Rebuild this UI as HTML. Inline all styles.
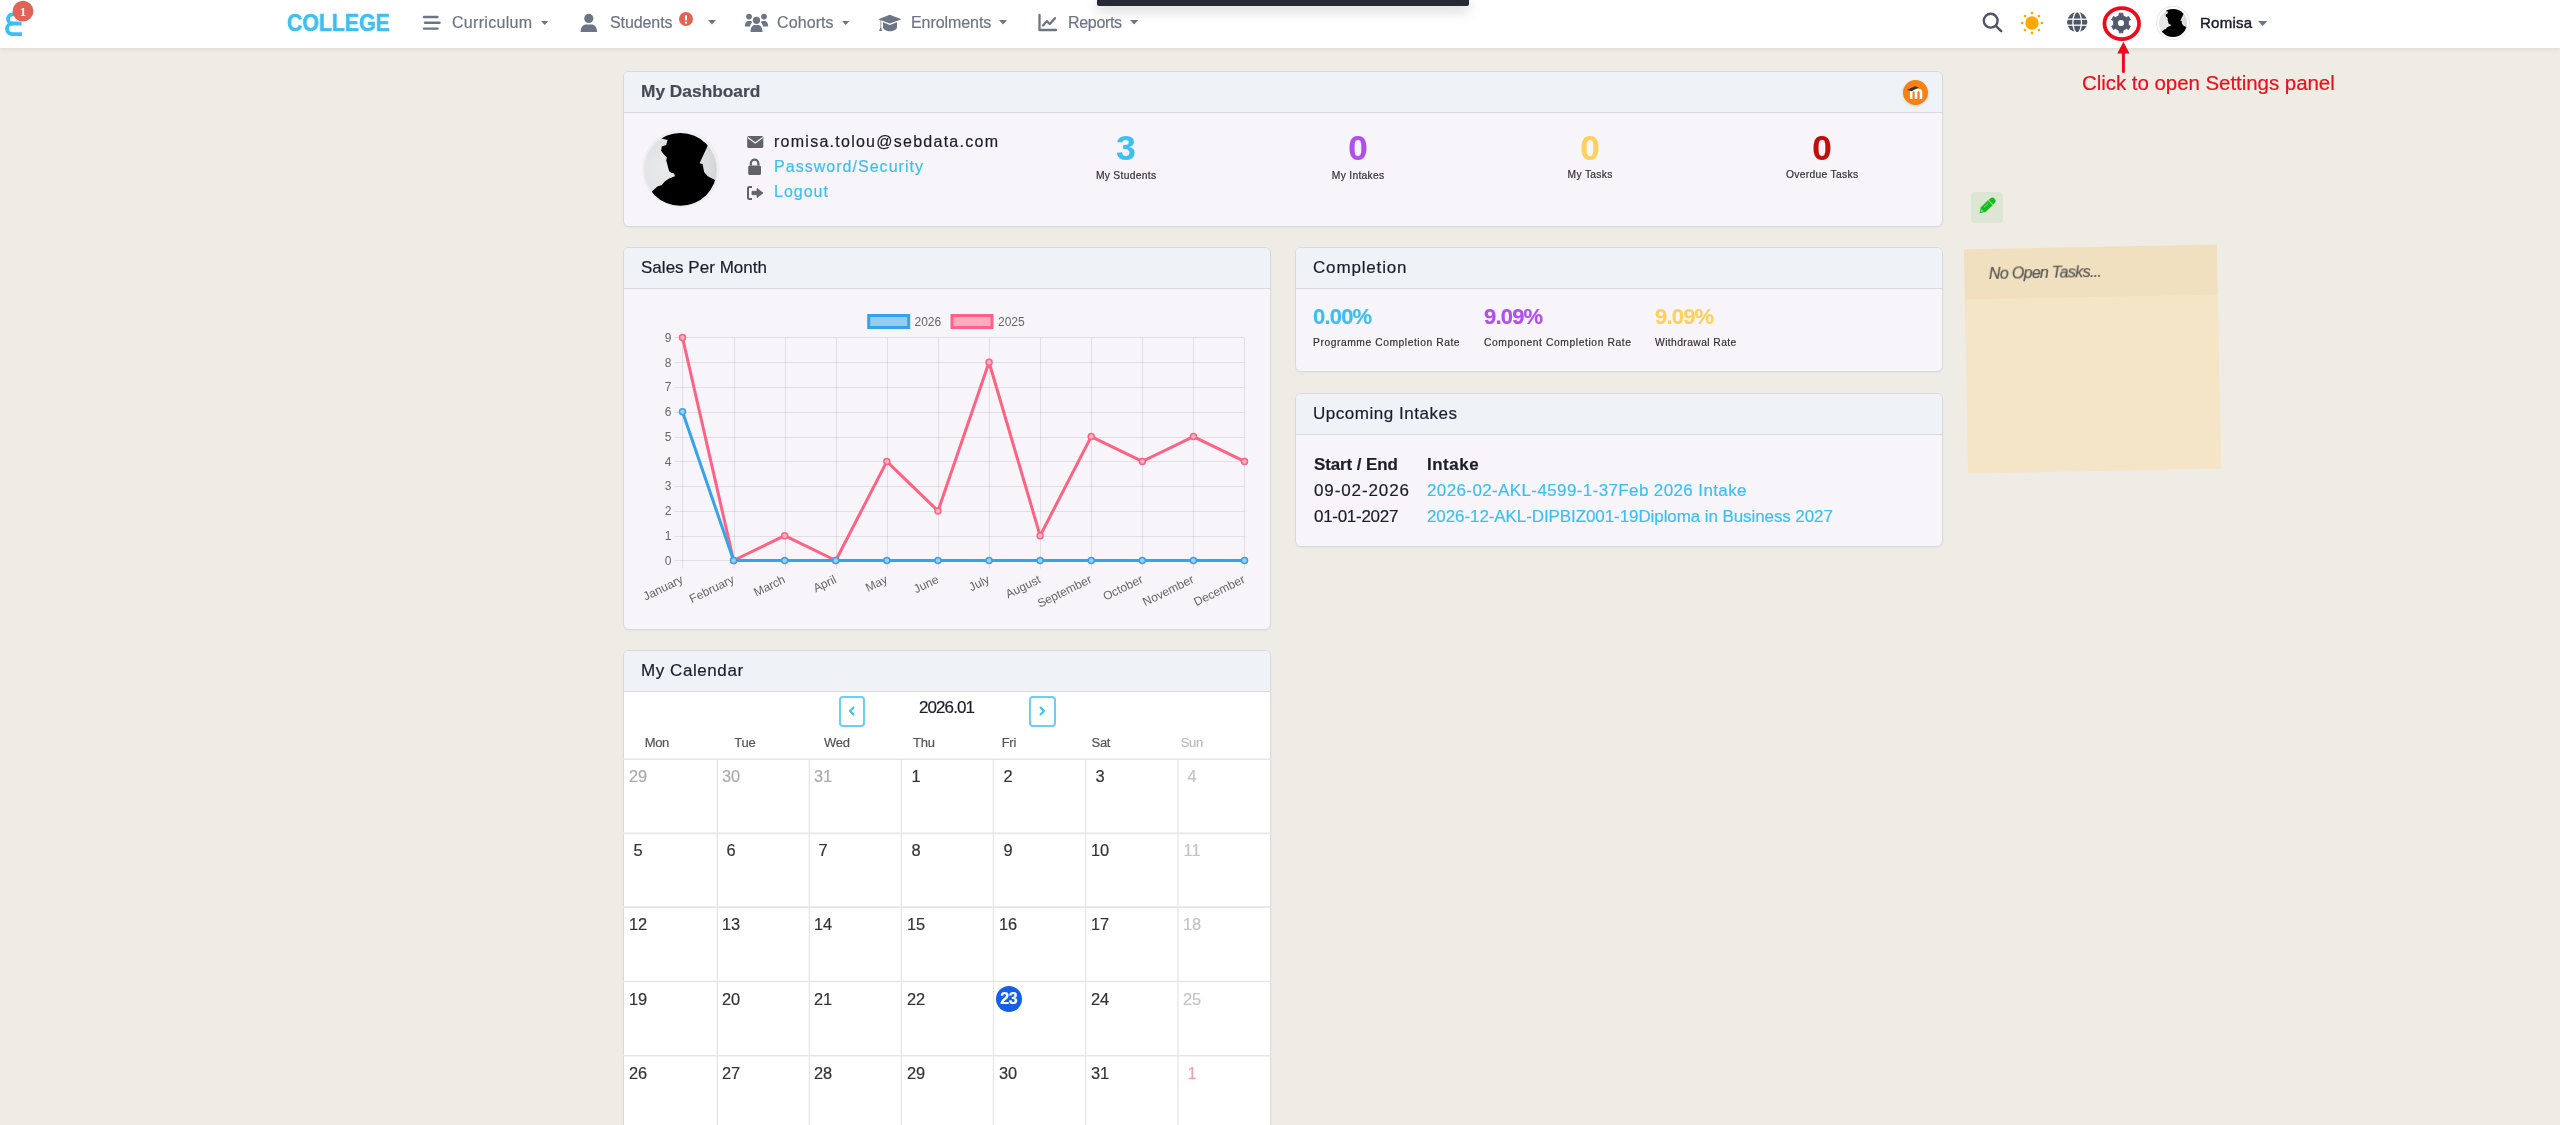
<!DOCTYPE html>
<html><head><meta charset="utf-8"><style>
html,body{margin:0;padding:0;width:2560px;height:1125px;overflow:hidden;background:#efebe5;font-family:"Liberation Sans", sans-serif;}
.t{position:absolute;white-space:nowrap;font-family:"Liberation Sans", sans-serif;will-change:transform;-webkit-text-stroke:0.2px currentColor;}
svg{will-change:transform;}
</style></head><body>
<div style="position:absolute;left:0px;top:0px;width:2560px;height:48px;background:#fff;box-shadow:0 1px 4px rgba(60,40,20,0.10);"></div>
<div style="position:absolute;left:1097px;top:0px;width:372px;height:5.5px;background:#272a33;border-radius:0 0 2px 2px;box-shadow:0 3px 14px rgba(0,0,0,0.28);"></div>
<svg style="position:absolute;left:0px;top:0px;overflow:visible;" width="40" height="40" viewBox="0 0 40 40"><path d="M21.5 23.5 H12.5 A4.5 4.55 0 0 1 12.5 14.4 H16" fill="none" stroke="#3cbff3" stroke-width="3.8"/><path d="M12.5 23.5 A5.5 5.3 0 0 0 12.5 34.1 H22" fill="none" stroke="#3cbff3" stroke-width="3.8"/><circle cx="23" cy="11.2" r="10.4" fill="#e06357"/><text x="23" y="15.6" text-anchor="middle" font-family="Liberation Serif" font-size="13" font-weight="700" fill="#fff">1</text></svg>
<div class="t" style="left:287.00px;top:10.76px;font-size:24.2px;line-height:24.2px;color:#3cbff3;font-weight:700;transform:scaleX(0.88);transform-origin:0 0;-webkit-text-stroke:0.6px #3cbff3;">COLLEGE</div>
<svg style="position:absolute;left:420px;top:12px;overflow:visible;" width="24" height="22" viewBox="0 0 24 22"><g stroke="#6d7486" stroke-width="2.4" stroke-linecap="round"><line x1="4" y1="5" x2="17.5" y2="5"/><line x1="5" y1="10.8" x2="19.5" y2="10.8"/><line x1="4" y1="16.6" x2="17.5" y2="16.6"/></g></svg>
<div class="t" style="left:452.30px;top:15.06px;font-size:16px;line-height:16px;color:#6d7486;letter-spacing:0.31px;">Curriculum</div>
<svg style="position:absolute;left:541.2px;top:20.56500000000001px;overflow:visible;" width="7.399999999999977" height="4.069999999999988" viewBox="0 0 7.399999999999977 4.069999999999988"><path d="M0 0 H7.399999999999977 L3.6999999999999886 4.069999999999988 Z" fill="#6d7486"/></svg>
<svg style="position:absolute;left:580px;top:13px;overflow:visible;" width="18" height="20" viewBox="0 0 18 20"><circle cx="8.8" cy="5.4" r="4.6" fill="#6d7486"/><path d="M0.6 19 C0.6 13.5 3.5 11.6 6 11.6 H11.6 C14.1 11.6 17 13.5 17 19 Z" fill="#6d7486"/></svg>
<div class="t" style="left:610.00px;top:15.06px;font-size:16px;line-height:16px;color:#6d7486;letter-spacing:-0.09px;">Students</div>
<svg style="position:absolute;left:679px;top:11.5px;overflow:visible;" width="14" height="14" viewBox="0 0 14 14"><circle cx="7" cy="7" r="7" fill="#e06357"/><rect x="6" y="3" width="2" height="5.5" rx="1" fill="#fff"/><circle cx="7" cy="10.7" r="1.1" fill="#fff"/></svg>
<svg style="position:absolute;left:708.2px;top:20.400000000000002px;overflow:visible;" width="8.0" height="4.4" viewBox="0 0 8.0 4.4"><path d="M0 0 H8.0 L4.0 4.4 Z" fill="#6d7486"/></svg>
<svg style="position:absolute;left:744px;top:13px;overflow:visible;" width="25" height="20" viewBox="0 0 25 20"><circle cx="12.5" cy="7.3" r="3.6" fill="#6d7486"/><circle cx="5" cy="3.6" r="2.9" fill="#6d7486"/><circle cx="20" cy="3.6" r="2.9" fill="#6d7486"/><path d="M6.5 19 C6.5 14.5 8.5 12 11 12 H14 C16.5 12 18.5 14.5 18.5 19 Z" fill="#6d7486"/><path d="M0.8 13.6 C0.8 10 2.3 8 4.3 8 H6 C7 8 7.8 8.5 8.2 9.2 C7 10.3 6.2 11.8 6 13.6 Z" fill="#6d7486"/><path d="M24.2 13.6 C24.2 10 22.7 8 20.7 8 H19 C18 8 17.2 8.5 16.8 9.2 C18 10.3 18.8 11.8 19 13.6 Z" fill="#6d7486"/></svg>
<div class="t" style="left:776.80px;top:15.06px;font-size:16px;line-height:16px;color:#6d7486;letter-spacing:0.1px;">Cohorts</div>
<svg style="position:absolute;left:842.2px;top:20.56500000000001px;overflow:visible;" width="7.399999999999977" height="4.069999999999988" viewBox="0 0 7.399999999999977 4.069999999999988"><path d="M0 0 H7.399999999999977 L3.6999999999999886 4.069999999999988 Z" fill="#6d7486"/></svg>
<svg style="position:absolute;left:878px;top:14px;overflow:visible;" width="25" height="18" viewBox="0 0 25 18"><path d="M11.8 0.8 L23.5 5.2 L11.8 9.6 L0.3 5.2 Z" fill="#6d7486"/><path d="M5 8.2 V13 C5 15.5 8.5 17.3 12 17.3 C15.5 17.3 19 15.5 19 13 V8.2 L11.8 10.9 Z" fill="#6d7486"/><path d="M2.5 6 V13.5 L1 17 H4 L3.2 13.5 V6.3 Z" fill="#6d7486"/></svg>
<div class="t" style="left:910.50px;top:15.06px;font-size:16px;line-height:16px;color:#6d7486;letter-spacing:-0.07px;">Enrolments</div>
<svg style="position:absolute;left:998.8px;top:20.400000000000002px;overflow:visible;" width="8.0" height="4.4" viewBox="0 0 8.0 4.4"><path d="M0 0 H8.0 L4.0 4.4 Z" fill="#6d7486"/></svg>
<svg style="position:absolute;left:1038px;top:14px;overflow:visible;" width="20" height="18" viewBox="0 0 20 18"><path d="M1.5 1 V16 H18" fill="none" stroke="#6d7486" stroke-width="2.3" stroke-linecap="round" stroke-linejoin="round"/><path d="M5 11.5 L8.8 7.2 L11.8 10 L17 4.2" fill="none" stroke="#6d7486" stroke-width="2.3" stroke-linecap="round" stroke-linejoin="round"/></svg>
<div class="t" style="left:1068.00px;top:15.06px;font-size:16px;line-height:16px;color:#6d7486;letter-spacing:-0.32px;">Reports</div>
<svg style="position:absolute;left:1130.2px;top:20.29000000000004px;overflow:visible;" width="8.399999999999864" height="4.6199999999999255" viewBox="0 0 8.399999999999864 4.6199999999999255"><path d="M0 0 H8.399999999999864 L4.199999999999932 4.6199999999999255 Z" fill="#6d7486"/></svg>
<svg style="position:absolute;left:1980px;top:10px;overflow:visible;" width="26" height="26" viewBox="0 0 26 26"><circle cx="10.7" cy="10.7" r="6.9" fill="none" stroke="#4f5566" stroke-width="2.4"/><line x1="15.8" y1="15.8" x2="21.2" y2="21.2" stroke="#4f5566" stroke-width="2.5" stroke-linecap="round"/></svg>
<svg style="position:absolute;left:2020.2px;top:10.9px;overflow:visible;" width="24" height="24" viewBox="0 0 24 24"><circle cx="12" cy="12" r="6.7" fill="#ffa800"/><circle cx="21.90" cy="12.00" r="1.35" fill="#ffa800"/><circle cx="19.00" cy="19.00" r="1.35" fill="#ffa800"/><circle cx="12.00" cy="21.90" r="1.35" fill="#ffa800"/><circle cx="5.00" cy="19.00" r="1.35" fill="#ffa800"/><circle cx="2.10" cy="12.00" r="1.35" fill="#ffa800"/><circle cx="5.00" cy="5.00" r="1.35" fill="#ffa800"/><circle cx="12.00" cy="2.10" r="1.35" fill="#ffa800"/><circle cx="19.00" cy="5.00" r="1.35" fill="#ffa800"/></svg>
<svg style="position:absolute;left:2066.5px;top:12.3px;overflow:visible;" width="21" height="21" viewBox="0 0 21 21"><circle cx="10.2" cy="10.2" r="10.1" fill="#4f5669"/><ellipse cx="10.2" cy="10.2" rx="4.3" ry="10.6" fill="none" stroke="#fff" stroke-width="1.3"/><line x1="0" y1="7.2" x2="21" y2="7.2" stroke="#fff" stroke-width="1.3"/><line x1="0" y1="13.2" x2="21" y2="13.2" stroke="#fff" stroke-width="1.3"/></svg>
<svg style="position:absolute;left:2111px;top:12.8px;overflow:visible;" width="20" height="20" viewBox="0 0 20 20"><polygon points="6.19,3.66 8.09,2.33 8.01,0.20 11.99,0.20 11.91,2.33 13.81,3.66 13.59,3.53 15.68,4.51 17.49,3.37 19.48,6.83 17.59,7.82 17.40,10.13 17.40,9.87 17.59,12.18 19.48,13.17 17.49,16.63 15.68,15.49 13.59,16.47 13.81,16.34 11.91,17.67 11.99,19.80 8.01,19.80 8.09,17.67 6.19,16.34 6.41,16.47 4.32,15.49 2.51,16.63 0.52,13.17 2.41,12.18 2.60,9.87 2.60,10.13 2.41,7.82 0.52,6.83 2.51,3.37 4.32,4.51 6.41,3.53" fill="#525a6e" stroke="#525a6e" stroke-width="0.8" stroke-linejoin="round"/><circle cx="10" cy="10" r="3.1" fill="#fff"/></svg>
<svg style="position:absolute;left:2100px;top:0px;overflow:visible;" width="45" height="50" viewBox="0 0 45 50"><ellipse cx="21.75" cy="23.65" rx="17.3" ry="15.5" fill="none" stroke="#ee0a1e" stroke-width="3.8"/></svg>
<svg style="position:absolute;left:2110px;top:38px;overflow:visible;" width="26" height="36" viewBox="0 0 26 36"><path d="M13.4 3.7 L19.5 15.6 L7.3 15.6 Z" fill="#ee0a1e"/><line x1="13.4" y1="14" x2="13.4" y2="33.5" stroke="#ee0a1e" stroke-width="3" stroke-linecap="round"/></svg>
<div class="t" style="left:2082.00px;top:73.15px;font-size:20.5px;line-height:20.5px;color:#e8101e;letter-spacing:-0.05px;">Click to open Settings panel</div>
<div style="position:absolute;left:2155.8px;top:5.7px;width:34.6px;height:34.6px;border-radius:50%;background:#fff;box-shadow:0 0 0 1px #e6e8ec inset;"></div>
<svg style="position:absolute;left:2159.10px;top:9.00px" width="28.00" height="28.00" viewBox="-36.4 -36.4 72.8 72.8"><defs><clipPath id="cp2173"><circle cx="0" cy="0" r="36.4"/></clipPath><radialGradient id="rg2173" cx="0.3" cy="0.5" r="0.8"><stop offset="0" stop-color="#e9eaeb"/><stop offset="0.7" stop-color="#dcdddf"/><stop offset="1" stop-color="#c4c6c9"/></radialGradient></defs><g clip-path="url(#cp2173)"><rect x="-40" y="-40" width="80" height="80" fill="url(#rg2173)"/><path d="M-18.6 -31 L-12.8 -29.5 L-14.2 -24.5 L-18.6 -23 L-19.3 -18.6 L-16.4 -14.9 L-13.5 -12 L-14.2 -9.1 L-12.8 -4 L-11.3 1.8 L-9.1 3.3 L-6.2 4 L-5.5 6.9 L-11.3 9.1 L-15.7 12 L-18.6 15.7 L-23 17.1 L-28 21.5 L-40 40 L40 40 L40 10 L34.6 10.6 L27.3 6.9 L23.7 2.6 L22.2 -5.5 L19.2 -6.2 L27.3 -23.7 L30 -40 L-20 -40 Z" fill="#000"/></g></svg>
<div class="t" style="left:2199.80px;top:15.40px;font-size:15px;line-height:15px;color:#1c1d2b;letter-spacing:0.25px;-webkit-text-stroke:0.45px #1c1d2b;">Romisa</div>
<svg style="position:absolute;left:2258.2px;top:20.64249999999995px;overflow:visible;" width="9.300000000000182" height="5.115000000000101" viewBox="0 0 9.300000000000182 5.115000000000101"><path d="M0 0 H9.300000000000182 L4.650000000000091 5.115000000000101 Z" fill="#6d7486"/></svg>
<div style="position:absolute;left:623px;top:71px;width:1318px;height:154px;border:1px solid #d8d9de;border-radius:6px;background:#f7f5f9;box-shadow:0 1px 2px rgba(0,0,0,0.04);overflow:hidden"><div style="position:absolute;left:0;top:0;right:0;height:40px;background:#eff2f7;border-bottom:1px solid #d8d9de"></div></div>
<div class="t" style="left:641.00px;top:82.56px;font-size:17.3px;line-height:17.3px;color:#454b57;font-weight:700;letter-spacing:0.02px;">My Dashboard</div>
<div style="position:absolute;left:1902.7px;top:79.7px;width:25.6px;height:25.6px;border-radius:50%;background:#f98012;box-shadow:0 1px 3px rgba(0,0,0,0.15)"></div>
<svg style="position:absolute;left:1902.7px;top:79.7px;overflow:visible;" width="26" height="26" viewBox="0 0 26 26"><path d="M8.2 19 V12.6 C8.2 10.8 9.3 10 10.6 10 C12 10 13 10.8 13 12.6 V19 M13 12.6 C13 10.8 14.1 10 15.5 10 C16.9 10 18 10.8 18 12.6 V19" fill="none" stroke="#fff" stroke-width="2.6"/><path d="M4 9.8 L12 6.3 L15.6 7.4 L8.6 11.2 Z" fill="#333"/></svg>
<div style="position:absolute;left:641.7px;top:130.3px;width:78px;height:78px;border-radius:50%;background:#efeef2;"></div>
<svg style="position:absolute;left:644.30px;top:132.90px" width="72.80" height="72.80" viewBox="-36.4 -36.4 72.8 72.8"><defs><clipPath id="cp680"><circle cx="0" cy="0" r="36.4"/></clipPath><radialGradient id="rg680" cx="0.3" cy="0.5" r="0.8"><stop offset="0" stop-color="#e9eaeb"/><stop offset="0.7" stop-color="#dcdddf"/><stop offset="1" stop-color="#c4c6c9"/></radialGradient></defs><g clip-path="url(#cp680)"><rect x="-40" y="-40" width="80" height="80" fill="url(#rg680)"/><path d="M-18.6 -31 L-12.8 -29.5 L-14.2 -24.5 L-18.6 -23 L-19.3 -18.6 L-16.4 -14.9 L-13.5 -12 L-14.2 -9.1 L-12.8 -4 L-11.3 1.8 L-9.1 3.3 L-6.2 4 L-5.5 6.9 L-11.3 9.1 L-15.7 12 L-18.6 15.7 L-23 17.1 L-28 21.5 L-40 40 L40 40 L40 10 L34.6 10.6 L27.3 6.9 L23.7 2.6 L22.2 -5.5 L19.2 -6.2 L27.3 -23.7 L30 -40 L-20 -40 Z" fill="#000"/></g></svg>
<svg style="position:absolute;left:747px;top:135px;overflow:visible;" width="17" height="14" viewBox="0 0 17 14"><rect x="0.2" y="1" width="16.1" height="12" rx="1.6" fill="#606266"/><path d="M0.8 2.5 L8.25 8 L15.7 2.5" fill="none" stroke="#f7f5f9" stroke-width="1.1"/></svg>
<svg style="position:absolute;left:747px;top:158px;overflow:visible;" width="16" height="18" viewBox="0 0 16 18"><path d="M3.8 7.5 V5.6 C3.8 3.2 5.6 1.6 7.6 1.6 C9.6 1.6 11.4 3.2 11.4 5.6 V7.5" fill="none" stroke="#606266" stroke-width="2.2"/><rect x="1.2" y="7.4" width="12.8" height="9.7" rx="1.6" fill="#606266"/></svg>
<svg style="position:absolute;left:747px;top:185px;overflow:visible;" width="17" height="16" viewBox="0 0 17 16"><path d="M5 2 H2.3 C1.5 2 1 2.5 1 3.3 V12.8 C1 13.6 1.5 14.1 2.3 14.1 H5" fill="none" stroke="#606266" stroke-width="2"/><path d="M5 6.3 H10 V3.4 L16 8 L10 12.6 V9.7 H5 Z" fill="#606266" stroke="#606266" stroke-width="0.8" stroke-linejoin="round"/></svg>
<div class="t" style="left:774.40px;top:134.06px;font-size:16px;line-height:16px;color:#1c1d2b;letter-spacing:1.26px;">romisa.tolou@sebdata.com</div>
<div class="t" style="left:774.40px;top:159.36px;font-size:16px;line-height:16px;color:#3cbff3;letter-spacing:1.03px;">Password/Security</div>
<div class="t" style="left:774.40px;top:184.26px;font-size:16px;line-height:16px;color:#3cbff3;letter-spacing:1.0px;">Logout</div>
<div class="t" style="left:1076.40px;width:100px;text-align:center;top:130.37px;font-size:35px;line-height:35px;color:#3cbff3;font-weight:700;">3</div>
<div class="t" style="left:1046.40px;width:160px;text-align:center;top:171.28px;font-size:10.3px;line-height:10.3px;color:#333;letter-spacing:0.3px;text-indent:0.3px;">My Students</div>
<div class="t" style="left:1308.30px;width:100px;text-align:center;top:130.37px;font-size:35px;line-height:35px;color:#b04ff0;font-weight:700;">0</div>
<div class="t" style="left:1278.30px;width:160px;text-align:center;top:171.28px;font-size:10.3px;line-height:10.3px;color:#333;letter-spacing:0.3px;text-indent:0.3px;">My Intakes</div>
<div class="t" style="left:1539.60px;width:100px;text-align:center;top:129.77px;font-size:35px;line-height:35px;color:#fdd15c;font-weight:700;">0</div>
<div class="t" style="left:1509.60px;width:160px;text-align:center;top:170.28px;font-size:10.3px;line-height:10.3px;color:#333;letter-spacing:0.3px;text-indent:0.3px;">My Tasks</div>
<div class="t" style="left:1772.00px;width:100px;text-align:center;top:129.77px;font-size:35px;line-height:35px;color:#c00d0d;font-weight:700;">0</div>
<div class="t" style="left:1742.00px;width:160px;text-align:center;top:170.28px;font-size:10.3px;line-height:10.3px;color:#333;letter-spacing:0.3px;text-indent:0.3px;">Overdue Tasks</div>
<div style="position:absolute;left:623px;top:247px;width:646px;height:381px;border:1px solid #d8d9de;border-radius:6px;background:#f7f5f9;box-shadow:0 1px 2px rgba(0,0,0,0.04);overflow:hidden"><div style="position:absolute;left:0;top:0;right:0;height:40px;background:#eff2f7;border-bottom:1px solid #d8d9de"></div></div>
<div class="t" style="left:641.00px;top:259.36px;font-size:17px;line-height:17px;color:#1c1d2b;letter-spacing:0.02px;">Sales Per Month</div>
<svg style="position:absolute;left:0;top:0" width="2560" height="1125" viewBox="0 0 2560 1125"><line x1="674.5" y1="560.5" x2="1244.5" y2="560.5" stroke="rgba(0,0,0,0.085)" stroke-width="1"/><text x="671.5" y="564.80" text-anchor="end" font-family="Liberation Sans" font-size="12" fill="#666">0</text><line x1="674.5" y1="536.5" x2="1244.5" y2="536.5" stroke="rgba(0,0,0,0.085)" stroke-width="1"/><text x="671.5" y="540.02" text-anchor="end" font-family="Liberation Sans" font-size="12" fill="#666">1</text><line x1="674.5" y1="511.5" x2="1244.5" y2="511.5" stroke="rgba(0,0,0,0.085)" stroke-width="1"/><text x="671.5" y="515.24" text-anchor="end" font-family="Liberation Sans" font-size="12" fill="#666">2</text><line x1="674.5" y1="486.5" x2="1244.5" y2="486.5" stroke="rgba(0,0,0,0.085)" stroke-width="1"/><text x="671.5" y="490.46" text-anchor="end" font-family="Liberation Sans" font-size="12" fill="#666">3</text><line x1="674.5" y1="461.5" x2="1244.5" y2="461.5" stroke="rgba(0,0,0,0.085)" stroke-width="1"/><text x="671.5" y="465.68" text-anchor="end" font-family="Liberation Sans" font-size="12" fill="#666">4</text><line x1="674.5" y1="437.5" x2="1244.5" y2="437.5" stroke="rgba(0,0,0,0.085)" stroke-width="1"/><text x="671.5" y="440.90" text-anchor="end" font-family="Liberation Sans" font-size="12" fill="#666">5</text><line x1="674.5" y1="412.5" x2="1244.5" y2="412.5" stroke="rgba(0,0,0,0.085)" stroke-width="1"/><text x="671.5" y="416.12" text-anchor="end" font-family="Liberation Sans" font-size="12" fill="#666">6</text><line x1="674.5" y1="387.5" x2="1244.5" y2="387.5" stroke="rgba(0,0,0,0.085)" stroke-width="1"/><text x="671.5" y="391.34" text-anchor="end" font-family="Liberation Sans" font-size="12" fill="#666">7</text><line x1="674.5" y1="362.5" x2="1244.5" y2="362.5" stroke="rgba(0,0,0,0.085)" stroke-width="1"/><text x="671.5" y="366.56" text-anchor="end" font-family="Liberation Sans" font-size="12" fill="#666">8</text><line x1="674.5" y1="337.5" x2="1244.5" y2="337.5" stroke="rgba(0,0,0,0.085)" stroke-width="1"/><text x="671.5" y="341.78" text-anchor="end" font-family="Liberation Sans" font-size="12" fill="#666">9</text><line x1="682.5" y1="337.5" x2="682.5" y2="568.5" stroke="rgba(0,0,0,0.085)" stroke-width="1"/><line x1="734.5" y1="337.5" x2="734.5" y2="568.5" stroke="rgba(0,0,0,0.085)" stroke-width="1"/><line x1="785.5" y1="337.5" x2="785.5" y2="568.5" stroke="rgba(0,0,0,0.085)" stroke-width="1"/><line x1="836.5" y1="337.5" x2="836.5" y2="568.5" stroke="rgba(0,0,0,0.085)" stroke-width="1"/><line x1="887.5" y1="337.5" x2="887.5" y2="568.5" stroke="rgba(0,0,0,0.085)" stroke-width="1"/><line x1="938.5" y1="337.5" x2="938.5" y2="568.5" stroke="rgba(0,0,0,0.085)" stroke-width="1"/><line x1="989.5" y1="337.5" x2="989.5" y2="568.5" stroke="rgba(0,0,0,0.085)" stroke-width="1"/><line x1="1040.5" y1="337.5" x2="1040.5" y2="568.5" stroke="rgba(0,0,0,0.085)" stroke-width="1"/><line x1="1091.5" y1="337.5" x2="1091.5" y2="568.5" stroke="rgba(0,0,0,0.085)" stroke-width="1"/><line x1="1142.5" y1="337.5" x2="1142.5" y2="568.5" stroke="rgba(0,0,0,0.085)" stroke-width="1"/><line x1="1193.5" y1="337.5" x2="1193.5" y2="568.5" stroke="rgba(0,0,0,0.085)" stroke-width="1"/><line x1="1244.5" y1="337.5" x2="1244.5" y2="568.5" stroke="rgba(0,0,0,0.085)" stroke-width="1"/><text transform="translate(680.00,574) rotate(-26)" x="0" y="9" text-anchor="end" font-family="Liberation Sans" font-size="12" fill="#666">January</text><text transform="translate(731.09,574) rotate(-26)" x="0" y="9" text-anchor="end" font-family="Liberation Sans" font-size="12" fill="#666">February</text><text transform="translate(782.18,574) rotate(-26)" x="0" y="9" text-anchor="end" font-family="Liberation Sans" font-size="12" fill="#666">March</text><text transform="translate(833.27,574) rotate(-26)" x="0" y="9" text-anchor="end" font-family="Liberation Sans" font-size="12" fill="#666">April</text><text transform="translate(884.36,574) rotate(-26)" x="0" y="9" text-anchor="end" font-family="Liberation Sans" font-size="12" fill="#666">May</text><text transform="translate(935.45,574) rotate(-26)" x="0" y="9" text-anchor="end" font-family="Liberation Sans" font-size="12" fill="#666">June</text><text transform="translate(986.54,574) rotate(-26)" x="0" y="9" text-anchor="end" font-family="Liberation Sans" font-size="12" fill="#666">July</text><text transform="translate(1037.63,574) rotate(-26)" x="0" y="9" text-anchor="end" font-family="Liberation Sans" font-size="12" fill="#666">August</text><text transform="translate(1088.72,574) rotate(-26)" x="0" y="9" text-anchor="end" font-family="Liberation Sans" font-size="12" fill="#666">September</text><text transform="translate(1139.81,574) rotate(-26)" x="0" y="9" text-anchor="end" font-family="Liberation Sans" font-size="12" fill="#666">October</text><text transform="translate(1190.90,574) rotate(-26)" x="0" y="9" text-anchor="end" font-family="Liberation Sans" font-size="12" fill="#666">November</text><text transform="translate(1241.99,574) rotate(-26)" x="0" y="9" text-anchor="end" font-family="Liberation Sans" font-size="12" fill="#666">December</text><polyline points="682.50,337.48 733.59,560.50 784.68,535.72 835.77,560.50 886.86,461.38 937.95,510.94 989.04,362.26 1040.13,535.72 1091.22,436.60 1142.31,461.38 1193.40,436.60 1244.49,461.38" fill="none" stroke="#ff6384" stroke-width="3" stroke-linejoin="round"/><circle cx="682.50" cy="337.48" r="3" fill="#ffb1c1" stroke="#ff6384" stroke-width="1.5"/><circle cx="733.59" cy="560.50" r="3" fill="#ffb1c1" stroke="#ff6384" stroke-width="1.5"/><circle cx="784.68" cy="535.72" r="3" fill="#ffb1c1" stroke="#ff6384" stroke-width="1.5"/><circle cx="835.77" cy="560.50" r="3" fill="#ffb1c1" stroke="#ff6384" stroke-width="1.5"/><circle cx="886.86" cy="461.38" r="3" fill="#ffb1c1" stroke="#ff6384" stroke-width="1.5"/><circle cx="937.95" cy="510.94" r="3" fill="#ffb1c1" stroke="#ff6384" stroke-width="1.5"/><circle cx="989.04" cy="362.26" r="3" fill="#ffb1c1" stroke="#ff6384" stroke-width="1.5"/><circle cx="1040.13" cy="535.72" r="3" fill="#ffb1c1" stroke="#ff6384" stroke-width="1.5"/><circle cx="1091.22" cy="436.60" r="3" fill="#ffb1c1" stroke="#ff6384" stroke-width="1.5"/><circle cx="1142.31" cy="461.38" r="3" fill="#ffb1c1" stroke="#ff6384" stroke-width="1.5"/><circle cx="1193.40" cy="436.60" r="3" fill="#ffb1c1" stroke="#ff6384" stroke-width="1.5"/><circle cx="1244.49" cy="461.38" r="3" fill="#ffb1c1" stroke="#ff6384" stroke-width="1.5"/><polyline points="682.50,411.82 733.59,560.50 784.68,560.50 835.77,560.50 886.86,560.50 937.95,560.50 989.04,560.50 1040.13,560.50 1091.22,560.50 1142.31,560.50 1193.40,560.50 1244.49,560.50" fill="none" stroke="#36a2eb" stroke-width="3" stroke-linejoin="round"/><circle cx="682.50" cy="411.82" r="3" fill="#9ad0f5" stroke="#36a2eb" stroke-width="1.5"/><circle cx="733.59" cy="560.50" r="3" fill="#9ad0f5" stroke="#36a2eb" stroke-width="1.5"/><circle cx="784.68" cy="560.50" r="3" fill="#9ad0f5" stroke="#36a2eb" stroke-width="1.5"/><circle cx="835.77" cy="560.50" r="3" fill="#9ad0f5" stroke="#36a2eb" stroke-width="1.5"/><circle cx="886.86" cy="560.50" r="3" fill="#9ad0f5" stroke="#36a2eb" stroke-width="1.5"/><circle cx="937.95" cy="560.50" r="3" fill="#9ad0f5" stroke="#36a2eb" stroke-width="1.5"/><circle cx="989.04" cy="560.50" r="3" fill="#9ad0f5" stroke="#36a2eb" stroke-width="1.5"/><circle cx="1040.13" cy="560.50" r="3" fill="#9ad0f5" stroke="#36a2eb" stroke-width="1.5"/><circle cx="1091.22" cy="560.50" r="3" fill="#9ad0f5" stroke="#36a2eb" stroke-width="1.5"/><circle cx="1142.31" cy="560.50" r="3" fill="#9ad0f5" stroke="#36a2eb" stroke-width="1.5"/><circle cx="1193.40" cy="560.50" r="3" fill="#9ad0f5" stroke="#36a2eb" stroke-width="1.5"/><circle cx="1244.49" cy="560.50" r="3" fill="#9ad0f5" stroke="#36a2eb" stroke-width="1.5"/><rect x="868.7" y="315.5" width="40" height="12" fill="rgba(54,162,235,0.5)" stroke="#36a2eb" stroke-width="3"/><text x="914.5" y="325.7" font-family="Liberation Sans" font-size="12" fill="#666">2026</text><rect x="952" y="315.5" width="40" height="12" fill="rgba(255,99,132,0.5)" stroke="#ff6384" stroke-width="3"/><text x="998" y="325.7" font-family="Liberation Sans" font-size="12" fill="#666">2025</text></svg>
<div style="position:absolute;left:1295px;top:247px;width:646px;height:123px;border:1px solid #d8d9de;border-radius:6px;background:#f7f5f9;box-shadow:0 1px 2px rgba(0,0,0,0.04);overflow:hidden"><div style="position:absolute;left:0;top:0;right:0;height:40px;background:#eff2f7;border-bottom:1px solid #d8d9de"></div></div>
<div class="t" style="left:1313.00px;top:259.21px;font-size:17px;line-height:17px;color:#1c1d2b;letter-spacing:0.84px;">Completion</div>
<div class="t" style="left:1313.00px;top:306.18px;font-size:22px;line-height:22px;color:#3cbff3;font-weight:700;letter-spacing:-0.8px;">0.00%</div>
<div class="t" style="left:1313.00px;top:338.28px;font-size:10.3px;line-height:10.3px;color:#333;letter-spacing:0.55px;">Programme Completion Rate</div>
<div class="t" style="left:1484.00px;top:306.18px;font-size:22px;line-height:22px;color:#b04ff0;font-weight:700;letter-spacing:-0.8px;">9.09%</div>
<div class="t" style="left:1484.00px;top:338.28px;font-size:10.3px;line-height:10.3px;color:#333;letter-spacing:0.59px;">Component Completion Rate</div>
<div class="t" style="left:1655.00px;top:306.18px;font-size:22px;line-height:22px;color:#fdd15c;font-weight:700;letter-spacing:-0.8px;">9.09%</div>
<div class="t" style="left:1655.00px;top:338.28px;font-size:10.3px;line-height:10.3px;color:#333;letter-spacing:0.41px;">Withdrawal Rate</div>
<div style="position:absolute;left:1295px;top:393px;width:646px;height:152px;border:1px solid #d8d9de;border-radius:6px;background:#f7f5f9;box-shadow:0 1px 2px rgba(0,0,0,0.04);overflow:hidden"><div style="position:absolute;left:0;top:0;right:0;height:40px;background:#eff2f7;border-bottom:1px solid #d8d9de"></div></div>
<div class="t" style="left:1313.00px;top:404.81px;font-size:17px;line-height:17px;color:#1c1d2b;letter-spacing:0.53px;">Upcoming Intakes</div>
<div class="t" style="left:1313.80px;top:457.09px;font-size:16.9px;line-height:16.9px;color:#1c1d2b;font-weight:700;letter-spacing:-0.06px;">Start / End</div>
<div class="t" style="left:1427.00px;top:457.09px;font-size:16.9px;line-height:16.9px;color:#1c1d2b;font-weight:700;letter-spacing:0.55px;">Intake</div>
<div class="t" style="left:1313.80px;top:481.61px;font-size:17px;line-height:17px;color:#1c1d2b;letter-spacing:0.89px;">09-02-2026</div>
<div class="t" style="left:1313.80px;top:507.81px;font-size:17px;line-height:17px;color:#1c1d2b;letter-spacing:-0.29px;">01-01-2027</div>
<div class="t" style="left:1427.00px;top:481.61px;font-size:17px;line-height:17px;color:#3cbff3;letter-spacing:0.38px;">2026-02-AKL-4599-1-37Feb 2026 Intake</div>
<div class="t" style="left:1427.00px;top:507.81px;font-size:17px;line-height:17px;color:#3cbff3;letter-spacing:-0.09px;">2026-12-AKL-DIPBIZ001-19Diploma in Business 2027</div>
<div style="position:absolute;left:623px;top:650px;width:646px;height:518px;border:1px solid #d8d9de;border-radius:6px;background:#fff;box-shadow:0 1px 2px rgba(0,0,0,0.04);overflow:hidden"><div style="position:absolute;left:0;top:0;right:0;height:40px;background:#eff2f7;border-bottom:1px solid #d8d9de"></div></div>
<div class="t" style="left:641.00px;top:662.11px;font-size:17px;line-height:17px;color:#1c1d2b;letter-spacing:0.57px;">My Calendar</div>
<div style="position:absolute;left:838.5px;top:696.3px;width:22.5px;height:26.5px;border:2px solid #6ccdf5;border-radius:4px"></div>
<div style="position:absolute;left:1029px;top:696.3px;width:22.5px;height:26.5px;border:2px solid #6ccdf5;border-radius:4px"></div>
<svg style="position:absolute;left:847.5px;top:706px;overflow:visible;" width="8" height="10" viewBox="0 0 8 10"><path d="M5.5 1.5 L2 5 L5.5 8.5" fill="none" stroke="#3cbff3" stroke-width="2" stroke-linecap="round" stroke-linejoin="round"/></svg>
<svg style="position:absolute;left:1038px;top:706px;overflow:visible;" width="8" height="10" viewBox="0 0 8 10"><path d="M2.5 1.5 L6 5 L2.5 8.5" fill="none" stroke="#3cbff3" stroke-width="2" stroke-linecap="round" stroke-linejoin="round"/></svg>
<div class="t" style="left:919.00px;top:699.41px;font-size:17px;line-height:17px;color:#1c1d2b;letter-spacing:-0.92px;">2026.01</div>
<div class="t" style="left:627.40px;width:60px;text-align:center;top:736.20px;font-size:13px;line-height:13px;color:#555;letter-spacing:-0.3px;text-indent:-0.3px;">Mon</div>
<div class="t" style="left:714.60px;width:60px;text-align:center;top:736.20px;font-size:13px;line-height:13px;color:#555;letter-spacing:-0.3px;text-indent:-0.3px;">Tue</div>
<div class="t" style="left:806.70px;width:60px;text-align:center;top:736.20px;font-size:13px;line-height:13px;color:#555;letter-spacing:-0.3px;text-indent:-0.3px;">Wed</div>
<div class="t" style="left:893.70px;width:60px;text-align:center;top:736.20px;font-size:13px;line-height:13px;color:#555;letter-spacing:-0.3px;text-indent:-0.3px;">Thu</div>
<div class="t" style="left:978.50px;width:60px;text-align:center;top:736.20px;font-size:13px;line-height:13px;color:#555;letter-spacing:-0.3px;text-indent:-0.3px;">Fri</div>
<div class="t" style="left:1071.00px;width:60px;text-align:center;top:736.20px;font-size:13px;line-height:13px;color:#555;letter-spacing:-0.3px;text-indent:-0.3px;">Sat</div>
<div class="t" style="left:1161.70px;width:60px;text-align:center;top:736.20px;font-size:13px;line-height:13px;color:#bbb;letter-spacing:-0.3px;text-indent:-0.3px;">Sun</div>
<svg style="position:absolute;left:0;top:0" width="2560" height="1125" viewBox="0 0 2560 1125"><line x1="623" y1="759.2" x2="1271" y2="759.2" stroke="#e6e6e8" stroke-width="1.6"/><line x1="623" y1="833.4" x2="1271" y2="833.4" stroke="#e6e6e8" stroke-width="1.6"/><line x1="623" y1="907.1" x2="1271" y2="907.1" stroke="#e6e6e8" stroke-width="1.6"/><line x1="623" y1="981.5" x2="1271" y2="981.5" stroke="#e6e6e8" stroke-width="1.6"/><line x1="623" y1="1055.8" x2="1271" y2="1055.8" stroke="#e6e6e8" stroke-width="1.6"/><line x1="717.3" y1="759" x2="717.3" y2="1125" stroke="#e6e6e8" stroke-width="1.3"/><line x1="809.4" y1="759" x2="809.4" y2="1125" stroke="#e6e6e8" stroke-width="1.3"/><line x1="901.5" y1="759" x2="901.5" y2="1125" stroke="#e6e6e8" stroke-width="1.3"/><line x1="993.5" y1="759" x2="993.5" y2="1125" stroke="#e6e6e8" stroke-width="1.3"/><line x1="1085.6" y1="759" x2="1085.6" y2="1125" stroke="#e6e6e8" stroke-width="1.3"/><line x1="1178.0" y1="759" x2="1178.0" y2="1125" stroke="#e6e6e8" stroke-width="1.3"/></svg>
<div class="t" style="left:617.50px;width:40px;text-align:center;top:767.72px;font-size:16.4px;line-height:16.4px;color:#aaa;">29</div>
<div class="t" style="left:711.30px;width:40px;text-align:center;top:767.72px;font-size:16.4px;line-height:16.4px;color:#aaa;">30</div>
<div class="t" style="left:803.40px;width:40px;text-align:center;top:767.72px;font-size:16.4px;line-height:16.4px;color:#aaa;">31</div>
<div class="t" style="left:895.50px;width:40px;text-align:center;top:767.72px;font-size:16.4px;line-height:16.4px;color:#333;">1</div>
<div class="t" style="left:987.50px;width:40px;text-align:center;top:767.72px;font-size:16.4px;line-height:16.4px;color:#333;">2</div>
<div class="t" style="left:1079.60px;width:40px;text-align:center;top:767.72px;font-size:16.4px;line-height:16.4px;color:#333;">3</div>
<div class="t" style="left:1172.00px;width:40px;text-align:center;top:767.72px;font-size:16.4px;line-height:16.4px;color:#c4c4c4;">4</div>
<div class="t" style="left:617.50px;width:40px;text-align:center;top:842.02px;font-size:16.4px;line-height:16.4px;color:#333;">5</div>
<div class="t" style="left:711.30px;width:40px;text-align:center;top:842.02px;font-size:16.4px;line-height:16.4px;color:#333;">6</div>
<div class="t" style="left:803.40px;width:40px;text-align:center;top:842.02px;font-size:16.4px;line-height:16.4px;color:#333;">7</div>
<div class="t" style="left:895.50px;width:40px;text-align:center;top:842.02px;font-size:16.4px;line-height:16.4px;color:#333;">8</div>
<div class="t" style="left:987.50px;width:40px;text-align:center;top:842.02px;font-size:16.4px;line-height:16.4px;color:#333;">9</div>
<div class="t" style="left:1079.60px;width:40px;text-align:center;top:842.02px;font-size:16.4px;line-height:16.4px;color:#333;">10</div>
<div class="t" style="left:1172.00px;width:40px;text-align:center;top:842.02px;font-size:16.4px;line-height:16.4px;color:#c4c4c4;">11</div>
<div class="t" style="left:617.50px;width:40px;text-align:center;top:916.32px;font-size:16.4px;line-height:16.4px;color:#333;">12</div>
<div class="t" style="left:711.30px;width:40px;text-align:center;top:916.32px;font-size:16.4px;line-height:16.4px;color:#333;">13</div>
<div class="t" style="left:803.40px;width:40px;text-align:center;top:916.32px;font-size:16.4px;line-height:16.4px;color:#333;">14</div>
<div class="t" style="left:895.50px;width:40px;text-align:center;top:916.32px;font-size:16.4px;line-height:16.4px;color:#333;">15</div>
<div class="t" style="left:987.50px;width:40px;text-align:center;top:916.32px;font-size:16.4px;line-height:16.4px;color:#333;">16</div>
<div class="t" style="left:1079.60px;width:40px;text-align:center;top:916.32px;font-size:16.4px;line-height:16.4px;color:#333;">17</div>
<div class="t" style="left:1172.00px;width:40px;text-align:center;top:916.32px;font-size:16.4px;line-height:16.4px;color:#c4c4c4;">18</div>
<div class="t" style="left:617.50px;width:40px;text-align:center;top:990.62px;font-size:16.4px;line-height:16.4px;color:#333;">19</div>
<div class="t" style="left:711.30px;width:40px;text-align:center;top:990.62px;font-size:16.4px;line-height:16.4px;color:#333;">20</div>
<div class="t" style="left:803.40px;width:40px;text-align:center;top:990.62px;font-size:16.4px;line-height:16.4px;color:#333;">21</div>
<div class="t" style="left:895.50px;width:40px;text-align:center;top:990.62px;font-size:16.4px;line-height:16.4px;color:#333;">22</div>
<div style="position:absolute;left:996.1999999999999px;top:985.6999999999999px;width:26.2px;height:26.2px;border-radius:50%;background:#1560e6"></div>
<div class="t" style="left:989.30px;width:40px;text-align:center;top:991.26px;font-size:16px;line-height:16px;color:#fff;font-weight:700;letter-spacing:-0.5px;text-indent:-0.5px;">23</div>
<div class="t" style="left:1079.60px;width:40px;text-align:center;top:990.62px;font-size:16.4px;line-height:16.4px;color:#333;">24</div>
<div class="t" style="left:1172.00px;width:40px;text-align:center;top:990.62px;font-size:16.4px;line-height:16.4px;color:#c4c4c4;">25</div>
<div class="t" style="left:617.50px;width:40px;text-align:center;top:1064.92px;font-size:16.4px;line-height:16.4px;color:#333;">26</div>
<div class="t" style="left:711.30px;width:40px;text-align:center;top:1064.92px;font-size:16.4px;line-height:16.4px;color:#333;">27</div>
<div class="t" style="left:803.40px;width:40px;text-align:center;top:1064.92px;font-size:16.4px;line-height:16.4px;color:#333;">28</div>
<div class="t" style="left:895.50px;width:40px;text-align:center;top:1064.92px;font-size:16.4px;line-height:16.4px;color:#333;">29</div>
<div class="t" style="left:987.50px;width:40px;text-align:center;top:1064.92px;font-size:16.4px;line-height:16.4px;color:#333;">30</div>
<div class="t" style="left:1079.60px;width:40px;text-align:center;top:1064.92px;font-size:16.4px;line-height:16.4px;color:#333;">31</div>
<div class="t" style="left:1172.00px;width:40px;text-align:center;top:1064.92px;font-size:16.4px;line-height:16.4px;color:#f2a0a0;">1</div>
<div style="position:absolute;left:1971px;top:191.5px;width:32px;height:31.5px;border-radius:4px;background:#dde6d3"></div>
<svg style="position:absolute;left:1967.15px;top:186.2px;overflow:visible" width="40" height="40" viewBox="-20 -20 40 40"><g transform="rotate(-43.5)"><path d="M-9.75 0 L-5 -3.15 H4.5 V3.15 H-5 Z" fill="#0fbf1d" stroke="#0fbf1d" stroke-width="0.6" stroke-linejoin="round"/><path d="M5.4 -3.15 H7.4 A3.15 3.15 0 0 1 7.4 3.15 H5.4 Z" fill="#0fbf1d"/><path d="M-8.2 0 L-6.2 -1.3 V1.3 Z" fill="#c9e6c4"/><path d="M-3.2 -1.1 H2.8" stroke="#9fdc9c" stroke-width="0.8"/></g></svg>
<div style="position:absolute;left:1966px;top:247px;width:253px;height:224px;transform:rotate(-1.1deg);transform-origin:50% 50%;background:#f4e5c6;overflow:hidden"><div style="position:absolute;left:0;top:0;width:100%;height:50px;background:#f1e0bf"></div></div>
<div class="t" style="left:1989.00px;top:265.96px;font-size:16px;line-height:16px;color:#555;letter-spacing:-0.67px;font-style:italic;transform:rotate(-1.1deg);transform-origin:0 100%;">No Open Tasks...</div>
</body></html>
